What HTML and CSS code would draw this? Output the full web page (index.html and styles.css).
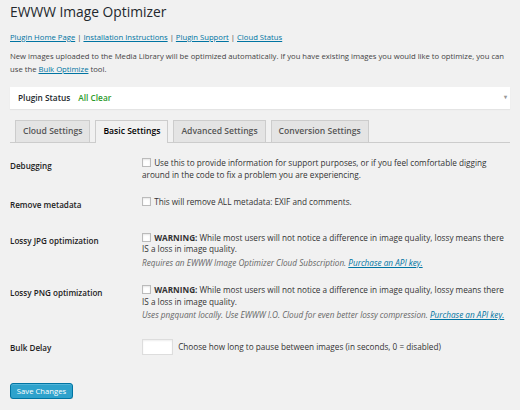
FILE: index.html
```html
<!DOCTYPE html>
<html lang="en">
<head>
  <meta charset="UTF-8" />
  <title>EWWW Image Optimizer</title>
  <link rel="stylesheet" href="styles.css">
</head>
<body>
  <div class="wrap">
    <h1>EWWW Image Optimizer</h1>
    <p class="links">
      <a href="#">Plugin Home Page</a> | <a href="#">Installation Instructions</a> | <a href="#">Plugin Support</a> | <a href="#">Cloud Status</a>
    </p>
    <p class="intro">New images uploaded to the Media Library will be optimized automatically. If you have existing images you would like to optimize, you can use the <a href="#">Bulk Optimize</a> tool.</p>

    <div class="status">
      <span class="status-label">Plugin Status</span>
      <span class="status-ok">All Clear</span>
      <span class="status-arrow">&#9662;</span>
    </div>

    <nav class="tabs">
      <a href="#" class="tab">Cloud Settings</a>
      <a href="#" class="tab active">Basic Settings</a>
      <a href="#" class="tab">Advanced Settings</a>
      <a href="#" class="tab">Conversion Settings</a>
    </nav>

    <div class="form">
      <div class="row">
        <div class="label">Debugging</div>
        <div class="field">
          <p><input type="checkbox" class="check" /> Use this to provide information for support purposes, or if you feel comfortable digging around in the code to fix a problem you are experiencing.</p>
        </div>
      </div>
      <div class="row">
        <div class="label">Remove metadata</div>
        <div class="field">
          <p><input type="checkbox" class="check" /> This will remove ALL metadata: EXIF and comments.</p>
        </div>
      </div>
      <div class="row">
        <div class="label">Lossy JPG optimization</div>
        <div class="field">
          <p><input type="checkbox" class="check" /> <b>WARNING:</b> While most users will not notice a difference in image quality, lossy means there IS a loss in image quality.</p>
          <p class="desc">Requires an EWWW Image Optimizer Cloud Subscription. <a href="#">Purchase an API key.</a></p>
        </div>
      </div>
      <div class="row">
        <div class="label">Lossy PNG optimization</div>
        <div class="field">
          <p><input type="checkbox" class="check" /> <b>WARNING:</b> While most users will not notice a difference in image quality, lossy means there IS a loss in image quality.</p>
          <p class="desc">Uses pngquant locally. Use EWWW I.O. Cloud for even better lossy compression. <a href="#">Purchase an API key.</a></p>
        </div>
      </div>
      <div class="row row-input">
        <div class="label">Bulk Delay</div>
        <div class="field">
          <p><input type="text" class="small-text" /> Choose how long to pause between images (in seconds, 0 = disabled)</p>
        </div>
      </div>
    </div>

    <button class="button-primary">Save Changes</button>
  </div>
</body>
</html>
```

FILE: styles.css
```css
body {
  background: #f1f1f1;
  color: #444;
  font-family: "Open Sans", sans-serif;
  font-size: 7.7px;
  line-height: 1.6;
  margin: 0;
}
a {
  color: #0074a2;
}
.wrap {
  padding: 0 10px;
}
h1 {
  font-size: 13.8px;
  font-weight: 400;
  color: #23282d;
  margin: 0;
  padding: 3px 0 0;
  line-height: 18px;
}
p {
  margin: 0;
}
.links {
  margin-top: 10px;
  line-height: 12px;
}
.intro {
  margin-top: 7px;
  line-height: 13px;
}
/* box stato plugin */
.status {
  margin-top: 11px;
  background: #fff;
  box-shadow: 0 1px 1px rgba(0, 0, 0, 0.05);
  height: 22px;
  display: flex;
  align-items: center;
  padding: 0 3px 0 8px;
  font-size: 8.3px;
  font-weight: 600;
  color: #23282d;
}
.status-ok {
  color: #2b9a2b;
  margin-left: 8px;
}
.status-arrow {
  margin-left: auto;
  color: #999;
  font-size: 6px;
}
/* schede */
.tabs {
  margin-top: 11px;
  display: flex;
  gap: 5px;
  padding-left: 5px;
  border-bottom: 1px solid #ccc;
}
.tab {
  display: block;
  background: #e4e4e4;
  border: 1px solid #ccc;
  border-bottom: none;
  padding: 0 7px;
  height: 21px;
  line-height: 21px;
  font-size: 8.6px;
  font-weight: 600;
  color: #555;
  text-decoration: none;
}
.tab.active {
  background: #f1f1f1;
  color: #000;
  margin-bottom: -1px;
  height: 22px;
}
/* righe del form */
.form {
  margin-top: 5px;
  font-size: 8.2px;
}
.row {
  display: grid;
  grid-template-columns: 132px 1fr;
  align-items: start;
}
.label {
  font-size: 8.1px;
  font-weight: 600;
  color: #222;
  padding: 12px 0;
  line-height: 11.5px;
}
.row-input .label {
  padding-top: 14px;
}
.field {
  padding: 9px 0 7px;
  line-height: 11.5px;
  color: #333;
}
.field .desc {
  margin-top: 2px;
  font-style: italic;
  color: #666;
}
.check {
  appearance: none;
  width: 9px;
  height: 9px;
  margin: 0 1px 0 0;
  border: 1px solid #bbb;
  background: #fff;
  vertical-align: -1px;
  box-shadow: inset 0 1px 2px rgba(0, 0, 0, 0.1);
}
.small-text {
  width: 31px;
  height: 16px;
  box-sizing: border-box;
  border: 1px solid #ddd;
  background: #fff;
  margin: 2.5px 3px 2.5px 0;
  vertical-align: middle;
  box-shadow: inset 0 1px 2px rgba(0, 0, 0, 0.07);
}
.button-primary {
  display: block;
  margin-top: 18px;
  background: #2ea2cc;
  border: 1px solid #0074a2;
  border-radius: 3px;
  color: #fff;
  font-family: "Open Sans", sans-serif;
  font-size: 7.7px;
  height: 16px;
  width: 63px;
  padding: 0;
  box-shadow: inset 0 1px 0 rgba(120, 200, 230, 0.5), 0 1px 0 rgba(0, 0, 0, 0.15);
}
```
